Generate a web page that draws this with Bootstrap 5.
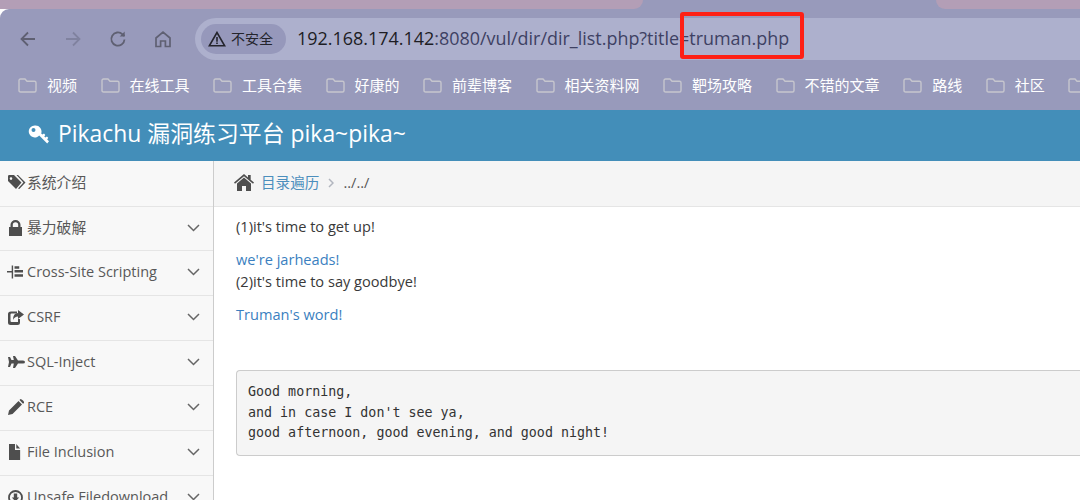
<!DOCTYPE html>
<html lang="zh">
<head>
<meta charset="utf-8">
<title>Pikachu</title>
<link href="https://cdn.jsdelivr.net/npm/bootstrap@5.3.0/dist/css/bootstrap.min.css" rel="stylesheet">
<style>
html,body{height:500px;overflow:hidden}
body{font-family:"Open Sans","Noto Sans CJK SC",sans-serif;font-size:14.6px;color:#393939;background:#fff;position:relative}
.tabstrip{height:9px;background:#989abb}
.tabside{background:#b39eb6}
.tabside-l{width:643px;border-bottom-right-radius:9px}
.tabside-r{width:144px;border-bottom-left-radius:9px}
.toolbar{height:59px;background:#989abb;padding-left:19px;border-top-left-radius:9px}
.navicon{width:45px;flex:none}
.navicon svg{display:block}
.urlpill{flex:1;height:42px;margin-left:-4px;background:#adb0cd;border-radius:21px 0 0 21px;padding-left:6px}
.chip{width:85px;height:30px;background:#9698bb;border-radius:15px;padding-left:7px;gap:5px;font-family:"Noto Sans CJK SC",sans-serif;font-size:14px;color:#24242c}
.urltext{margin-left:11px;font-family:"Open Sans","Noto Sans",sans-serif;font-size:17.96px;color:#3e4163;white-space:nowrap}
.urltext b{font-weight:400;color:#1d1d24}
.redbox{position:absolute;left:680px;top:12px;width:124px;height:47px;border:4px solid #fe2015;border-radius:3px}
.bookbar{height:42px;background:#989abb;padding:0 0 8px 18px;gap:23.5px;font-family:"Noto Sans CJK SC",sans-serif;font-size:15px;color:#fff;white-space:nowrap}
.bookitem{gap:10px;flex:none}
.siteheader{height:51px;background:#438eb9;color:#fff;padding:0 0 2px 28px;font-size:22.9px;gap:6px;white-space:nowrap}
.mainwrap{height:339px}
.sidepane{width:214px;flex:none;background:#f8f8f8;border-right:1px solid #ccc}
.siderow{height:45px;border-bottom:1px solid #e5e5e5;padding:0 13px 2px 8px;color:#585858;font-size:14.5px;white-space:nowrap}
.siderow:first-child{height:46px}
.siderow:nth-child(2){height:44px}
.cjklabel{font-size:14.8px}
.sideicon{width:18px;flex:none;margin-right:1px;color:#4e4e4e}
.sideicon svg{display:block}
.treeglyph{margin-left:-1px}
.fileglyph{margin-left:1px}
.chev{margin-left:auto;flex:none}
.rightpane{flex:1;min-width:0}
.crumbs{height:46px;background:#f5f5f5;border-bottom:1px solid #e5e5e5;padding:0 0 2px 20px;color:#555}
.crumbs a{color:#4c8fbd;text-decoration:none;margin-left:7px}
.sepchev{margin:0 9px 0 9px}
.bodytext{padding:8px 0 0 22px;color:#393939;line-height:22.5px}
.bodytext p{margin:0 0 10px}
.bodytext a{color:#3b7fc0;text-decoration:none}
.quote{margin:45px 0 0;height:86px;background:#f5f5f5;border:1px solid #ccc;border-right:0;border-radius:4px 0 0 4px;padding:11px 11px;font-family:"DejaVu Sans Mono",monospace;font-size:13.33px;line-height:20.5px;color:#333;overflow:hidden}
</style>
</head>
<body>
<div class="tabstrip d-flex justify-content-between">
  <div class="tabside tabside-l"></div>
  <div class="tabside tabside-r"></div>
</div>
<div class="toolbar d-flex align-items-center">
  <div class="navicon"><svg width="18" height="18" viewBox="0 0 18 18" fill="none" stroke="#5f6072" stroke-width="1.8"><path d="M16 9H2.500M9 2.500 2.500 9 9 15.500"/></svg></div>
  <div class="navicon"><svg width="18" height="18" viewBox="0 0 18 18" fill="none" stroke="#80829f" stroke-width="1.8"><path d="M2 9h13.500M9 2.500 15.500 9 9 15.500"/></svg></div>
  <div class="navicon"><svg width="18" height="18" viewBox="0 0 18 18" fill="none" stroke="#5f6072" stroke-width="1.8"><path d="M15.500 9.500a6.600 6.600 0 1 1-2-5.200L15.500 6"/><path d="M15.700 1.500v5h-5" fill="#5f6072" stroke="none"/></svg></div>
  <div class="navicon"><svg width="18" height="18" viewBox="0 0 18 18" fill="none" stroke="#5f6072" stroke-width="1.7"><path d="M2 8 9 2l7 6v8.500h-4.600v-5.500H6.600v5.500H2z"/></svg></div>
  <div class="urlpill d-flex align-items-center">
    <div class="chip d-flex align-items-center">
      <svg width="18" height="16" viewBox="0 0 18 16" fill="none" stroke="#24242c" stroke-width="1.6"><path d="M9 1.500 1.300 14.800h15.400z"/><path d="M9 6v4.800M9 11.600v1.500"/></svg>
      <span>不安全</span>
    </div>
    <div class="urltext"><b>192.168.174.142</b>:8080/vul/dir/dir_list.php?title=truman.php</div>
  </div>
</div>
<div class="redbox"></div>
<div class="bookbar d-flex align-items-center overflow-hidden">
  <div class="bookitem d-flex align-items-center"><svg width="19" height="15" viewBox="0 0 19 15" fill="none" stroke="#c6c6ce" stroke-width="1.400"><path d="M1 2.500Q1 1 2.500 1H7l2 2.200h7.500Q18 3.200 18 4.700v7.800q0 1.500-1.500 1.500h-14Q1 14 1 12.500z"/></svg><span>视频</span></div>
  <div class="bookitem d-flex align-items-center"><svg width="19" height="15" viewBox="0 0 19 15" fill="none" stroke="#c6c6ce" stroke-width="1.400"><path d="M1 2.500Q1 1 2.500 1H7l2 2.200h7.500Q18 3.200 18 4.700v7.800q0 1.500-1.500 1.500h-14Q1 14 1 12.500z"/></svg><span>在线工具</span></div>
  <div class="bookitem d-flex align-items-center"><svg width="19" height="15" viewBox="0 0 19 15" fill="none" stroke="#c6c6ce" stroke-width="1.400"><path d="M1 2.500Q1 1 2.500 1H7l2 2.200h7.500Q18 3.200 18 4.700v7.800q0 1.500-1.500 1.500h-14Q1 14 1 12.500z"/></svg><span>工具合集</span></div>
  <div class="bookitem d-flex align-items-center"><svg width="19" height="15" viewBox="0 0 19 15" fill="none" stroke="#c6c6ce" stroke-width="1.400"><path d="M1 2.500Q1 1 2.500 1H7l2 2.200h7.500Q18 3.200 18 4.700v7.800q0 1.500-1.500 1.500h-14Q1 14 1 12.500z"/></svg><span>好康的</span></div>
  <div class="bookitem d-flex align-items-center"><svg width="19" height="15" viewBox="0 0 19 15" fill="none" stroke="#c6c6ce" stroke-width="1.400"><path d="M1 2.500Q1 1 2.500 1H7l2 2.200h7.500Q18 3.200 18 4.700v7.800q0 1.500-1.500 1.500h-14Q1 14 1 12.500z"/></svg><span>前辈博客</span></div>
  <div class="bookitem d-flex align-items-center"><svg width="19" height="15" viewBox="0 0 19 15" fill="none" stroke="#c6c6ce" stroke-width="1.400"><path d="M1 2.500Q1 1 2.500 1H7l2 2.200h7.500Q18 3.200 18 4.700v7.800q0 1.500-1.500 1.500h-14Q1 14 1 12.500z"/></svg><span>相关资料网</span></div>
  <div class="bookitem d-flex align-items-center"><svg width="19" height="15" viewBox="0 0 19 15" fill="none" stroke="#c6c6ce" stroke-width="1.400"><path d="M1 2.500Q1 1 2.500 1H7l2 2.200h7.500Q18 3.200 18 4.700v7.800q0 1.500-1.500 1.500h-14Q1 14 1 12.500z"/></svg><span>靶场攻略</span></div>
  <div class="bookitem d-flex align-items-center"><svg width="19" height="15" viewBox="0 0 19 15" fill="none" stroke="#c6c6ce" stroke-width="1.400"><path d="M1 2.500Q1 1 2.500 1H7l2 2.200h7.500Q18 3.200 18 4.700v7.800q0 1.500-1.500 1.500h-14Q1 14 1 12.500z"/></svg><span>不错的文章</span></div>
  <div class="bookitem d-flex align-items-center"><svg width="19" height="15" viewBox="0 0 19 15" fill="none" stroke="#c6c6ce" stroke-width="1.400"><path d="M1 2.500Q1 1 2.500 1H7l2 2.200h7.500Q18 3.200 18 4.700v7.800q0 1.500-1.500 1.500h-14Q1 14 1 12.500z"/></svg><span>路线</span></div>
  <div class="bookitem d-flex align-items-center"><svg width="19" height="15" viewBox="0 0 19 15" fill="none" stroke="#c6c6ce" stroke-width="1.400"><path d="M1 2.500Q1 1 2.500 1H7l2 2.200h7.500Q18 3.200 18 4.700v7.800q0 1.500-1.500 1.500h-14Q1 14 1 12.500z"/></svg><span>社区</span></div>
  <div class="bookitem d-flex align-items-center"><svg width="19" height="15" viewBox="0 0 19 15" fill="none" stroke="#c6c6ce" stroke-width="1.400"><path d="M1 2.500Q1 1 2.500 1H7l2 2.200h7.500Q18 3.200 18 4.700v7.800q0 1.500-1.500 1.500h-14Q1 14 1 12.500z"/></svg></div>
</div>
<div class="siteheader d-flex align-items-center">
  <svg width="24" height="24" viewBox="0 0 24 24" fill="#fff"><path fill-rule="evenodd" d="M7.500 2.500a6 6 0 0 1 5.700 7.900l1.200 1.200 1.600-1 1.300 1.300-1 1.600 1 1 1.600-1 1.300 1.300-1 1.600 1.800 1.800-1.800 2.300-8-8A6 6 0 1 1 7.500 2.500zM5.500 5a2 2 0 1 0 0 4 2 2 0 0 0 0-4z"/></svg>
  <span>Pikachu 漏洞练习平台 pika~pika~</span>
</div>
<div class="mainwrap d-flex">
  <div class="sidepane">
    <div class="siderow d-flex align-items-center"><span class="sideicon"><svg width="18" height="15" viewBox="0 0 18 15" fill="currentColor"><path fill-rule="evenodd" d="M0 1.200Q0 0 1.200 0H6l7.500 7.500L8 14 0 6zM3 2.300a1.300 1.300 0 1 0 0 2.600 1.300 1.300 0 0 0 0-2.600z"/><path d="M8.500 0h1.500l7.500 7.500L11.300 14l-1.300-.6 5.400-5.900z"/></svg></span><span class="cjklabel">系统介绍</span></div>
    <div class="siderow d-flex align-items-center"><span class="sideicon"><svg width="15" height="16" viewBox="0 0 15 16" fill="currentColor"><path fill-rule="evenodd" d="M1 7h1.500V4.700a5 4.700 0 0 1 10 0V7H14v9H1zM4.800 7h5.400V4.700a2.700 2.500 0 0 0-5.400 0z"/></svg></span><span class="cjklabel">暴力破解</span><svg class="chev" width="13" height="8" viewBox="0 0 13 8" fill="none" stroke="#666" stroke-width="1.500"><path d="m1 1 5.500 5.500L12 1"/></svg></div>
    <div class="siderow d-flex align-items-center"><span class="sideicon"><svg class="treeglyph" width="16" height="14" viewBox="0 0 17 14" fill="currentColor"><path d="M0 6h5v1.500H0zM5 0h1.500v14H5zM8 1h5v2.500H8zM8 5h9v2.500H8zM8 9.500h9V12H8z"/></svg></span><span>Cross-Site Scripting</span><svg class="chev" width="13" height="8" viewBox="0 0 13 8" fill="none" stroke="#666" stroke-width="1.500"><path d="m1 1 5.500 5.500L12 1"/></svg></div>
    <div class="siderow d-flex align-items-center"><span class="sideicon"><svg width="16" height="15" viewBox="0 0 16 15" fill="currentColor"><path d="M3 1.500h6v2H3.500Q2.500 3.500 2.500 4.500v6.500q0 1 1 1H10V9h2v3.500Q12 15 9.500 15h-7Q0 15 0 12.500V4Q0 1.500 3 1.500z"/><path d="M10 0l6 4.500-6 4.500V6.500Q6.500 6.500 5 10 5 3 10 3z"/></svg></span><span>CSRF</span><svg class="chev" width="13" height="8" viewBox="0 0 13 8" fill="none" stroke="#666" stroke-width="1.500"><path d="m1 1 5.500 5.500L12 1"/></svg></div>
    <div class="siderow d-flex align-items-center"><span class="sideicon"><svg width="17" height="12" viewBox="0 0 17 12" fill="currentColor"><path d="M0 1h2l1.500 3h2.300L5 0h2l3 4.500h5q2 0 2 1.500t-2 1.500h-5L7 12H5l.8-4.500H3.500L2 11H0l1-5z"/></svg></span><span>SQL-Inject</span><svg class="chev" width="13" height="8" viewBox="0 0 13 8" fill="none" stroke="#666" stroke-width="1.500"><path d="m1 1 5.500 5.500L12 1"/></svg></div>
    <div class="siderow d-flex align-items-center"><span class="sideicon"><svg width="16" height="16" viewBox="0 0 16 16" fill="currentColor"><path d="M0 16l1-4.500L10.500 2 14 5.500 4.500 15zM11.500 1l1-1q1 0 2.500 1.500T16 4l-1 .7z"/></svg></span><span>RCE</span><svg class="chev" width="13" height="8" viewBox="0 0 13 8" fill="none" stroke="#666" stroke-width="1.500"><path d="m1 1 5.500 5.500L12 1"/></svg></div>
    <div class="siderow d-flex align-items-center"><span class="sideicon"><svg class="fileglyph" width="12" height="16" viewBox="0 0 14 16" preserveAspectRatio="none" fill="currentColor"><path d="M0 0h7v6h6v10H0zM8.500 0 13 4.500H8.500z"/></svg></span><span>File Inclusion</span><svg class="chev" width="13" height="8" viewBox="0 0 13 8" fill="none" stroke="#666" stroke-width="1.500"><path d="m1 1 5.500 5.500L12 1"/></svg></div>
    <div class="siderow d-flex align-items-center"><span class="sideicon"><svg width="15" height="15" viewBox="0 0 15 15"><circle cx="7.500" cy="7.500" r="6.500" fill="none" stroke="currentColor" stroke-width="1.800"/><path d="M5.800 3.500h3.400v4h2L7.500 11.500 3.800 7.500h2z" fill="currentColor"/></svg></span><span>Unsafe Filedownload</span><svg class="chev" width="13" height="8" viewBox="0 0 13 8" fill="none" stroke="#666" stroke-width="1.500"><path d="m1 1 5.500 5.500L12 1"/></svg></div>
  </div>
  <div class="rightpane">
    <div class="crumbs d-flex align-items-center">
      <svg width="20" height="17" viewBox="0 0 20 17" fill="#4e4e4e"><path d="M10 0l4 3.400V1h2.700v4.700L20 8.500l-1 1.200L10 2.200 1 9.700 0 8.500z"/><path d="M10 3.600 17 9.400V17h-5v-5H8v5H3V9.400z"/></svg>
      <a href="#">目录遍历</a>
      <svg class="sepchev" width="6" height="10" viewBox="0 0 6 10" fill="none" stroke="#b2b6bf" stroke-width="1.500"><path d="m1 1 4 4-4 4"/></svg>
      <span>../../</span>
    </div>
    <div class="bodytext">
      <p>(1)it's time to get up!</p>
      <a href="#">we're jarheads!</a><br>
      <p>(2)it's time to say goodbye!</p>
      <a href="#">Truman's word!</a>
      <pre class="quote">Good morning,
and in case I don't see ya,
good afternoon, good evening, and good night!</pre>
    </div>
  </div>
</div>
<script src="https://cdn.jsdelivr.net/npm/bootstrap@5.3.0/dist/js/bootstrap.bundle.min.js"></script>
</body>
</html>
